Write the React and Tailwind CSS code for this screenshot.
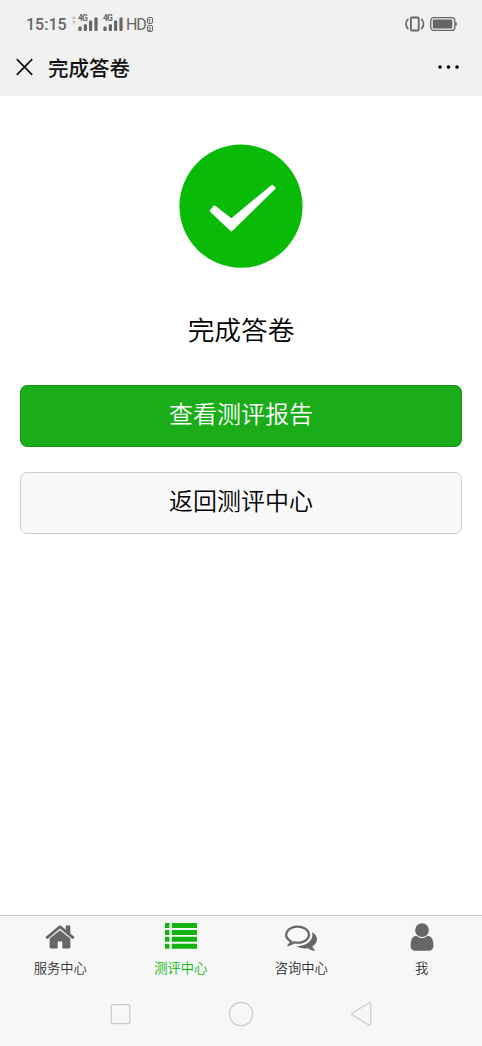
const tabs = [
  {
    label: "服务中心",
    path: "M1472 992v480q0 26-19 45t-45 19h-384v-384h-256v384h-384q-26 0-45-19t-19-45v-480q0-1 .5-3t.5-3l575-474 575 474q1 2 1 6zm223-69l-62 74q-8 9-21 11h-3q-13 0-21-7l-692-577-692 577q-12 8-24 7-13-2-21-11l-62-74q-8-10-7-23.5t11-21.5l719-599q32-26 76-26t76 26l244 204v-195q0-14 9-23t23-9h192q14 0 23 9t9 23v408l219 182q10 8 11 21.5t-7 23.5z",
  },
  {
    label: "测评中心",
    active: true,
    path: "M30 112h190q30 0 30 30v220q0 30-30 30h-190q-30 0-30-30v-220q0-30 30-30zm0 388h190q30 0 30 30v220q0 30-30 30h-190q-30 0-30-30v-220q0-30 30-30zm0 388h190q30 0 30 30v220q0 30-30 30h-190q-30 0-30-30v-220q0-30 30-30zm0 388h190q30 0 30 30v220q0 30-30 30h-190q-30 0-30-30v-220q0-30 30-30zM414 112h1348q30 0 30 30v220q0 30-30 30h-1348q-30 0-30-30v-220q0-30 30-30zm0 388h1348q30 0 30 30v220q0 30-30 30h-1348q-30 0-30-30v-220q0-30 30-30zm0 388h1348q30 0 30 30v220q0 30-30 30h-1348q-30 0-30-30v-220q0-30 30-30zm0 388h1348q30 0 30 30v220q0 30-30 30h-1348q-30 0-30-30v-220q0-30 30-30z",
  },
  {
    label: "咨询中心",
    path: "M704 384q-153 0-286 52t-211.5 141-78.5 191q0 82 53 158t149 132l97 56-35 84q34-20 62-39l44-31 53 10q78 14 153 14 153 0 286-52t211.5-141 78.5-191-78.5-191-211.5-141-286-52zm0-128q191 0 353.5 68.5t256.5 186.5 94 257-94 257-256.5 186.5-353.5 68.5q-86 0-176-16-124 88-278 128-36 9-86 16h-3q-11 0-20.5-8t-11.5-21q-1-3-1-6.5t.5-6.5 2-6l2.5-5 3.5-5.5 4-5 4.5-5 4-4.5q5-6 23-25t26-29.5 22.5-29 25-38.5 20.5-44q-124-72-195-177t-71-224q0-139 94-257t256.5-186.5 353.5-68.5zm822 1169q10 24 20.5 44t25 38.5 22.5 29 26 29.5 23 25q1 1 4 4.5t4.5 5 4 5 3.5 5.5l2.5 5 2 6 .5 6.5-1 6.5q-3 14-13 22t-22 7q-50-7-86-16-154-40-278-128-90 16-176 16-271 0-472-132 58 4 88 4 161 0 309-45t264-129q125-92 192-212t67-254q0-77-23-152 129 71 204 178t75 230q0 120-71 224.5t-195 176.5z",
  },
  {
    label: "我",
    path: "M1536 1399q0 109-62.5 187t-150.5 78h-854q-88 0-150.5-78t-62.5-187q0-85 8.5-160.5t31.5-152 58.5-131 94-89 134.5-34.5q131 128 313 128t313-128q76 0 134.5 34.5t94 89 58.5 131 31.5 152 8.5 160.5zm-256-887q0 159-112.5 271.5t-271.5 112.5-271.5-112.5-112.5-271.5 112.5-271.5 271.5-112.5 271.5 112.5 112.5 271.5z",
  },
];

function Signal() {
  return (
    <div className="relative h-4 w-5">
      <span className="absolute left-0 -top-[2px] text-[8.5px] leading-[9px] font-bold tracking-[-0.8px]">4G</span>
      <svg className="h-4 w-5" viewBox="0 0 20 16" fill="currentColor">
        <rect x="0.4" y="10.5" width="3.2" height="4.5" rx="1" />
        <rect x="5.8" y="8.2" width="3.2" height="6.8" rx="1" />
        <rect x="11" y="4.5" width="3.2" height="10.5" rx="1" />
        <rect x="16.4" y="1.5" width="3.2" height="13.5" rx="1" />
      </svg>
    </div>
  );
}

function StatusBar() {
  return (
    <div className="flex h-12 items-center justify-between pl-[26px] pr-[25px] text-[#666] font-[Roboto,sans-serif] font-normal">
      <div className="flex items-center">
        <span className="w-[46px] pt-[2px] text-[16px] font-medium">15:15</span>
        <svg className="mb-2 mr-[2px] h-2 w-1" viewBox="0 0 4 8" fill="#bbb">
          <path d="M0 3l2-3 2 3zM0 5h4l-2 3z" />
        </svg>
        <Signal />
        <div className="ml-[5px]">
          <Signal />
        </div>
        <span className="ml-[3px] pt-[2px] text-[16px] tracking-[-1.2px]">HD</span>
        <div className="ml-px flex flex-col gap-px text-[6px] font-bold">
          <span className="h-[7px] w-[6px] rounded-xs border border-[#666] text-center leading-[5px]">1</span>
          <span className="h-[7px] w-[6px] rounded-xs border border-[#666] text-center leading-[5px]">2</span>
        </div>
      </div>
      <div className="flex items-center gap-[5px]">
        <svg className="h-4 w-5" viewBox="0 0 20 16" fill="none" stroke="currentColor">
          <rect x="5.9" y="1.5" width="7.8" height="13" rx="1" strokeWidth="1.8" />
          <path d="M3.3 2.8Q-1.3 8 3.3 13.2M16.3 2.8Q20.9 8 16.3 13.2" strokeWidth="1.6" />
        </svg>
        <svg className="h-4 w-[27px]" viewBox="0 0 27 16" fill="none" stroke="currentColor">
          <rect x="0.8" y="1.6" width="24" height="12.8" rx="3" strokeWidth="1.3" />
          <rect x="2.8" y="3.6" width="19.5" height="8.8" rx="1" fill="currentColor" stroke="none" />
          <path d="M26 6.2v3.6" strokeWidth="1.5" />
        </svg>
      </div>
    </div>
  );
}

export default function App() {
  return (
    <div className="flex h-[1046px] w-[482px] flex-col bg-white font-['Noto_Sans_CJK_SC',sans-serif] font-[350] text-black">
      <header className="h-24 shrink-0 bg-[#f1f1f1]">
        <StatusBar />
        <div className="flex h-[38px] items-center pl-4 pr-[22px]">
          <svg className="h-[18px] w-[18px]" viewBox="0 0 18 18" fill="none" stroke="#111" strokeWidth="1.7">
            <path d="M.8 1.2l15.4 15.6M16.2 1.2L.8 16.8" />
          </svg>
          <h1 className="ml-[14px] text-[20.5px] font-medium text-[#111]">完成答卷</h1>
          <svg className="ml-auto h-1 w-[22px]" viewBox="0 0 22 4">
            <circle cx="2" cy="2" r="1.8" />
            <circle cx="10.5" cy="2" r="1.8" />
            <circle cx="19" cy="2" r="1.8" />
          </svg>
        </div>
      </header>

      <main className="flex flex-1 flex-col items-center px-5 pt-12">
        <svg className="h-[124px] w-[124px]" viewBox="0 0 124 124">
          <circle cx="62" cy="62.2" r="61.6" fill="#09bb07" />
          <path d="M31 66.2L34.5 61.8Q35.2 61 36.3 61.8L52.3 74.3L92.3 41.2Q93.3 40.3 94.2 41.2L96.3 43.3Q97 44 96.2 45L53.5 86.8Q52.3 88 51.2 86.8L31.2 67.7Q30.4 66.9 31 66.2Z" fill="#fff" />
        </svg>
        <h2 className="mt-[41px] text-[26.7px] leading-10">完成答卷</h2>
        <button className="mt-9 h-[62px] w-full rounded-[7px] border border-[#189717] bg-[#1aad19] pb-[7px] text-2xl text-white">
          查看测评报告
        </button>
        <button className="mt-[25px] h-[62px] w-full rounded-[7px] border border-[#cfcfcf] bg-[#f8f8f8] pb-[7px] text-2xl">
          返回测评中心
        </button>
      </main>

      <footer className="h-[131px] shrink-0 border-t border-[#c8c8cb] bg-[#f7f7f8]">
        <nav className="grid h-[68px] grid-cols-4 pt-[5px]">
          {tabs.map((tab) => (
            <a
              key={tab.label}
              className={`flex flex-col items-center text-[13.3px] leading-5 ${
                tab.active ? "text-[#09bb07]" : "text-[#333]"
              }`}
            >
              <svg
                className={`h-8 w-8 ${tab.active ? "fill-[#12b510]" : "fill-[#666]"}`}
                viewBox="0 0 1792 1792"
              >
                <path d={tab.path} />
              </svg>
              <span className="mt-[5px]">{tab.label}</span>
            </a>
          ))}
        </nav>
        {/* Android navigation keys */}
        <div className="flex h-[60px] items-center justify-between px-[108px]">
          <svg className="h-[26px] w-[26px]" viewBox="0 0 26 26" fill="none" stroke="#c9c9c9" strokeWidth="1.2">
            <rect x="3.2" y="3.6" width="18.6" height="19" rx="2" />
          </svg>
          <svg className="h-[26px] w-[26px]" viewBox="0 0 26 26" fill="none" stroke="#c9c9c9" strokeWidth="1.2">
            <circle cx="13" cy="13" r="11.6" />
          </svg>
          <svg className="h-[26px] w-[26px]" viewBox="0 0 26 26" fill="none" stroke="#c9c9c9" strokeWidth="1.2">
            <path d="M4.7 11.8L20.5 2.2Q22.7 1.2 22.7 3.4V22.6Q22.7 24.8 20.5 23.8L4.7 14.2Q2.8 13 4.7 11.8Z" />
          </svg>
        </div>
      </footer>
    </div>
  );
}
